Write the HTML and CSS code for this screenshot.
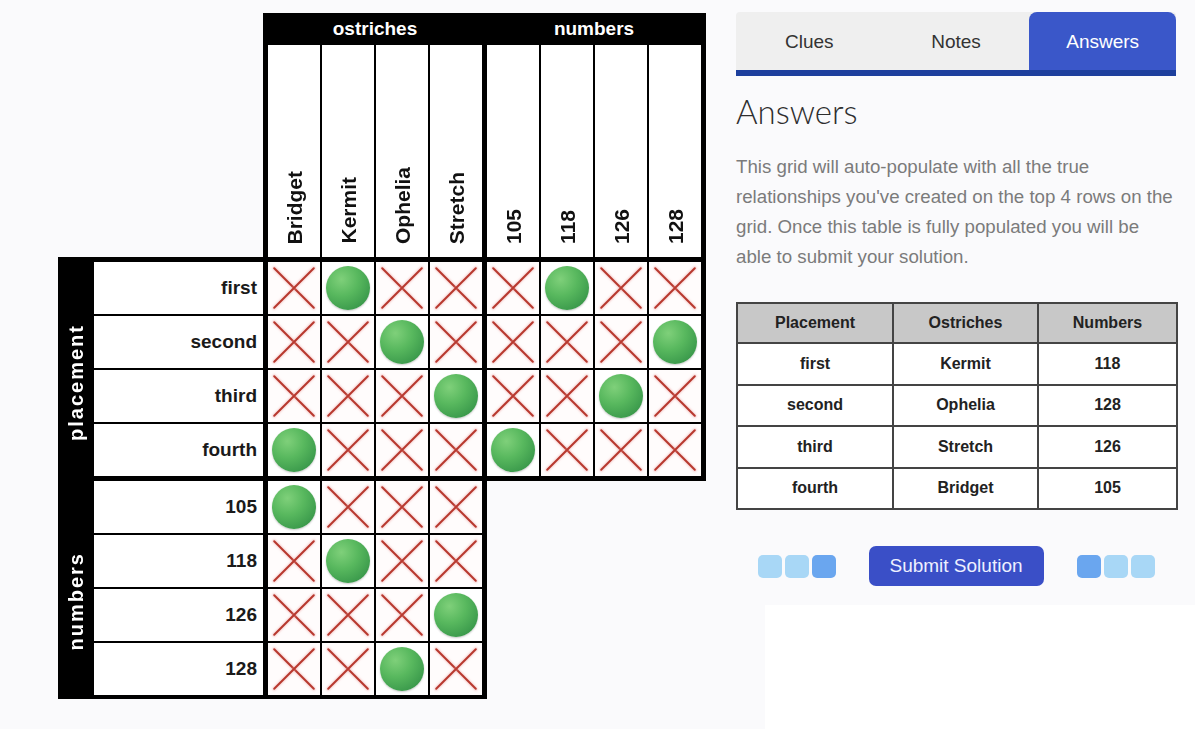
FILE: index.html
```html
<!DOCTYPE html>
<html lang="en">
<head>
<meta charset="utf-8">
<title>Logic Puzzle - Answers</title>
<link rel="stylesheet" href="styles.css">
</head>
<body>
<div class="page">
  <div class="board">
    <div class="corner"></div>
    <div class="group">
      <div class="group-title">ostriches</div>
      <div class="heads">
        <div class="head"><span>Bridget</span></div>
        <div class="head"><span>Kermit</span></div>
        <div class="head"><span>Ophelia</span></div>
        <div class="head"><span>Stretch</span></div>
      </div>
    </div>
    <div class="group">
      <div class="group-title">numbers</div>
      <div class="heads">
        <div class="head"><span>105</span></div>
        <div class="head"><span>118</span></div>
        <div class="head"><span>126</span></div>
        <div class="head"><span>128</span></div>
      </div>
    </div>

    <div class="rowgroup">
      <div class="side"><span>placement</span></div>
      <div class="labels">
        <div class="label">first</div>
        <div class="label">second</div>
        <div class="label">third</div>
        <div class="label">fourth</div>
      </div>
    </div>
    <div class="block">
      <div class="cell x"></div><div class="cell o"></div><div class="cell x"></div><div class="cell x"></div>
      <div class="cell x"></div><div class="cell x"></div><div class="cell o"></div><div class="cell x"></div>
      <div class="cell x"></div><div class="cell x"></div><div class="cell x"></div><div class="cell o"></div>
      <div class="cell o"></div><div class="cell x"></div><div class="cell x"></div><div class="cell x"></div>
    </div>
    <div class="block">
      <div class="cell x"></div><div class="cell o"></div><div class="cell x"></div><div class="cell x"></div>
      <div class="cell x"></div><div class="cell x"></div><div class="cell x"></div><div class="cell o"></div>
      <div class="cell x"></div><div class="cell x"></div><div class="cell o"></div><div class="cell x"></div>
      <div class="cell o"></div><div class="cell x"></div><div class="cell x"></div><div class="cell x"></div>
    </div>

    <div class="rowgroup">
      <div class="side"><span>numbers</span></div>
      <div class="labels">
        <div class="label">105</div>
        <div class="label">118</div>
        <div class="label">126</div>
        <div class="label">128</div>
      </div>
    </div>
    <div class="block">
      <div class="cell o"></div><div class="cell x"></div><div class="cell x"></div><div class="cell x"></div>
      <div class="cell x"></div><div class="cell o"></div><div class="cell x"></div><div class="cell x"></div>
      <div class="cell x"></div><div class="cell x"></div><div class="cell x"></div><div class="cell o"></div>
      <div class="cell x"></div><div class="cell x"></div><div class="cell o"></div><div class="cell x"></div>
    </div>
    <div class="empty"></div>
  </div>

  <aside class="panel">
    <nav class="tabs">
      <div class="tab">Clues</div>
      <div class="tab">Notes</div>
      <div class="tab active">Answers</div>
    </nav>
    <h1 class="title">Answers</h1>
    <p class="intro">This grid will auto-populate with all the true<br>relationships you've created on the top 4 rows on the<br>grid. Once this table is fully populated you will be<br>able to submit your solution.</p>
    <table class="answers">
      <thead>
        <tr><th class="c1">Placement</th><th class="c2">Ostriches</th><th class="c3">Numbers</th></tr>
      </thead>
      <tbody>
        <tr><td>first</td><td>Kermit</td><td>118</td></tr>
        <tr><td>second</td><td>Ophelia</td><td>128</td></tr>
        <tr><td>third</td><td>Stretch</td><td>126</td></tr>
        <tr><td>fourth</td><td>Bridget</td><td>105</td></tr>
      </tbody>
    </table>
    <div class="actions">
      <div class="dots">
        <span class="sq light"></span><span class="sq light"></span><span class="sq dark"></span>
      </div>
      <button class="submit" type="button">Submit Solution</button>
      <div class="dots">
        <span class="sq dark"></span><span class="sq light"></span><span class="sq light"></span>
      </div>
    </div>
    <div class="whitebox"></div>
  </aside>
</div>
</body>
</html>
```

FILE: styles.css
```css
* { box-sizing: border-box; }
html, body { margin: 0; }
body {
  background: #fafafc;
  font-family: "Liberation Sans", Arial, sans-serif;
  width: 1195px;
  height: 729px;
  overflow: hidden;
}
.page {
  display: flex;
  align-items: flex-start;
  padding: 12px 0 0 58px;
}

/* ---------- puzzle board ---------- */
.board {
  margin-top: 1px;
  display: grid;
  grid-template-columns: 205px 214px 214px;
  grid-template-rows: 244px 214px 214px;
  gap: 5px;
  padding: 0 5px 4px 0;
  background: #000;
}
.corner { background: #fafafc; }
.empty { background: #fafafc; margin: 0 -5px -4px 0; }

.group { display: flex; flex-direction: column; gap: 2px; }
.group-title {
  height: 30px;
  display: flex;
  align-items: center;
  justify-content: center;
  color: #fff;
  font-weight: bold;
  font-size: 19px;
  padding-top: 2px;
}
.heads {
  flex: 1;
  display: grid;
  grid-template-columns: repeat(4, 52px);
  gap: 2px;
}
.head {
  background: #fff;
  display: flex;
  align-items: flex-end;
  justify-content: center;
  padding-bottom: 13px;
}
.head span {
  writing-mode: vertical-rl;
  transform: rotate(180deg);
  font-weight: bold;
  font-size: 21px;
  line-height: 1;
  color: #111;
}

.rowgroup { display: flex; }
.side {
  width: 36px;
  display: flex;
  align-items: center;
  justify-content: center;
  padding-top: 26px;
}
.side span {
  writing-mode: vertical-rl;
  transform: rotate(180deg);
  color: #fff;
  font-weight: bold;
  font-size: 20px;
  letter-spacing: 2px;
  line-height: 1;
}
.labels {
  flex: 1;
  display: grid;
  grid-template-rows: repeat(4, 52px);
  gap: 2px;
}
.label {
  background: #fff;
  display: flex;
  align-items: center;
  justify-content: flex-end;
  padding-right: 6px;
  font-weight: bold;
  font-size: 19px;
  color: #1a1a1a;
}

.block {
  display: grid;
  grid-template-columns: repeat(4, 52px);
  grid-template-rows: repeat(4, 52px);
  gap: 2px;
}
.cell { background: #fff; position: relative; }
.x { background: #fffcfc; }
.x::before, .x::after {
  content: "";
  position: absolute;
  left: 50%;
  top: 50%;
  width: 58px;
  height: 2px;
  margin: -1px 0 0 -29px;
  background: #b8392f;
  box-shadow: 0 0 2px 1px rgba(236, 150, 150, 0.4);
  border-radius: 1px;
  transform: rotate(45deg);
}
.x::after { transform: rotate(-45deg); }
.o::before {
  content: "";
  position: absolute;
  left: 4px;
  top: 4px;
  width: 44px;
  height: 44px;
  border-radius: 50%;
  background: radial-gradient(circle at 35% 30%, #7fd07a 0%, #58b85e 40%, #3d9c4d 75%, #2f8440 100%);
  box-shadow: 0 1px 2px rgba(0, 0, 0, 0.22);
}

/* ---------- right panel ---------- */
.panel {
  width: 440px;
  margin-left: 30px;
  display: flex;
  flex-direction: column;
}
.tabs {
  display: flex;
  height: 64px;
  background: #efefef;
  border-bottom: 6px solid #1d3f9d;
  border-radius: 4px 4px 0 0;
}
.tab {
  flex: 1;
  display: flex;
  align-items: center;
  justify-content: center;
  padding-top: 2px;
  font-size: 19px;
  color: #333;
}
.tab.active {
  background: #3a57c9;
  color: #fff;
  border-radius: 8px 8px 0 0;
}
.title {
  margin: 15px 0 0;
  font-family: Lato, "Open Sans", sans-serif;
  font-weight: 300;
  font-size: 33px;
  line-height: 40px;
  color: #2e2e2e;
}
.intro {
  margin: 21px 0 0;
  width: 460px;
  font-size: 18.7px;
  line-height: 30px;
  color: #7b7b7b;
}
.answers {
  margin-top: 30px;
  width: 440px;
  border-collapse: collapse;
  table-layout: fixed;
}
.answers th, .answers td {
  border: 2px solid #444;
  text-align: center;
  font-weight: bold;
  font-size: 16px;
  color: #222;
  padding: 0;
}
.answers th { background: #c8c8c8; height: 40px; }
.answers td { background: #fff; height: 41.5px; }
.c1 { width: 156px; }
.c2 { width: 145px; }
.c3 { width: 139px; }

.actions {
  margin-top: 36px;
  display: flex;
  justify-content: center;
  align-items: center;
  gap: 33px;
}
.dots { display: flex; gap: 3px; }
.sq {
  width: 24px;
  height: 23px;
  border-radius: 5px;
  filter: blur(0.6px);
}
.sq.light { background: #a8d7f6; }
.sq.dark { background: #6aa6ef; }
.submit {
  width: 175px;
  height: 40px;
  border: none;
  border-radius: 7px;
  background: #3a4fc7;
  color: #eef0ff;
  font-family: "Liberation Sans", Arial, sans-serif;
  font-size: 19px;
  padding: 0;
}
.whitebox {
  margin: 19px -19px 0 29px;
  height: 130px;
  background: #fff;
}
```
